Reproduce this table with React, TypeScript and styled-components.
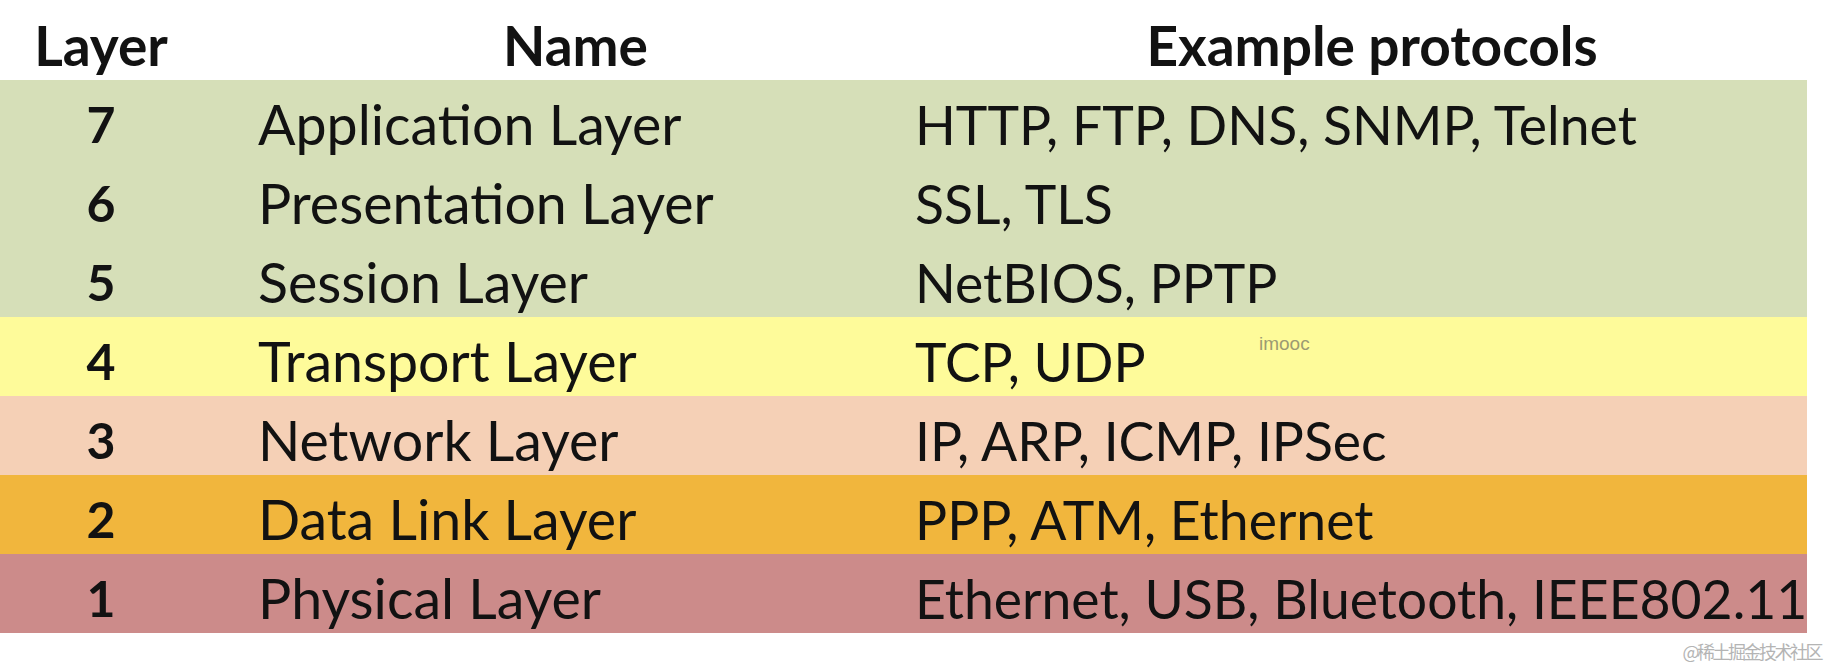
import React from "react";
import styled, { createGlobalStyle } from "styled-components";

const GlobalStyle = createGlobalStyle`
  html, body {
    margin: 0;
    padding: 0;
    background: #ffffff;
  }
  body {
    font-family: Lato, "Liberation Sans", sans-serif;
    color: #121212;
  }
`;

const Page = styled.div`
  position: relative;
  width: 1824px;
  height: 666px;
  overflow: hidden;
  background: #ffffff;
`;

const Table = styled.div`
  width: 1807px;
  display: flex;
  flex-direction: column;
`;

const Row = styled.div<{ $bg?: string; $h: number }>`
  display: grid;
  grid-template-columns: 202px 713px 892px;
  height: ${(p) => p.$h}px;
  align-items: center;
  background: ${(p) => p.$bg || "transparent"};
`;

const HeadCell = styled.div<{ $shift?: number }>`
  font-weight: 700;
  font-size: 55px;
  text-align: center;
  padding-left: ${(p) => p.$shift || 0}px;
  padding-top: 10px;
  white-space: nowrap;
`;

const NumCell = styled.div`
  font-weight: 700;
  font-size: 50px;
  text-align: center;
  padding-top: 8px;
`;

const NameCell = styled.div`
  font-size: 55.5px;
  padding-left: 56px;
  padding-top: 8px;
  white-space: nowrap;
`;

const ProtoCell = styled.div`
  font-size: 53.5px;
  padding-top: 8px;
  white-space: nowrap;
`;

const Stamp = styled.span`
  position: absolute;
  left: 1259px;
  top: 333px;
  font-family: "Liberation Sans", Arial, sans-serif;
  font-size: 19px;
  color: #9c9a72;
`;

const Footer = styled.div`
  display: flex;
  justify-content: flex-end;
  padding: 5px 3px 0 0;
  font-family: "Noto Sans CJK SC", "Liberation Sans", sans-serif;
  font-size: 18px;
  letter-spacing: -2.5px;
  color: #b4b4b4;
`;

type Layer = { n: number; name: string; protos: string; bg: string };

const layers: Layer[] = [
  { n: 7, name: "Application Layer", protos: "HTTP, FTP, DNS, SNMP, Telnet", bg: "#d6dfb8" },
  { n: 6, name: "Presentation Layer", protos: "SSL, TLS", bg: "#d6dfb8" },
  { n: 5, name: "Session Layer", protos: "NetBIOS, PPTP", bg: "#d6dfb8" },
  { n: 4, name: "Transport Layer", protos: "TCP, UDP", bg: "#fefb9a" },
  { n: 3, name: "Network Layer", protos: "IP, ARP, ICMP, IPSec", bg: "#f5d0b6" },
  { n: 2, name: "Data Link Layer", protos: "PPP, ATM, Ethernet", bg: "#f1b63d" },
  { n: 1, name: "Physical Layer", protos: "Ethernet, USB, Bluetooth, IEEE802.11", bg: "#cc8b8a" },
];

export default function App() {
  return (
    <Page>
      <GlobalStyle />
      <Table>
        <Row $h={80}>
          <HeadCell>Layer</HeadCell>
          <HeadCell $shift={34}>Name</HeadCell>
          <HeadCell $shift={22}>Example protocols</HeadCell>
        </Row>
        {layers.map((l) => (
          <Row key={l.n} $h={79} $bg={l.bg}>
            <NumCell>{l.n}</NumCell>
            <NameCell>{l.name}</NameCell>
            <ProtoCell>{l.protos}</ProtoCell>
          </Row>
        ))}
      </Table>
      <Footer>@稀土掘金技术社区</Footer>
      <Stamp>imooc</Stamp>
    </Page>
  );
}
